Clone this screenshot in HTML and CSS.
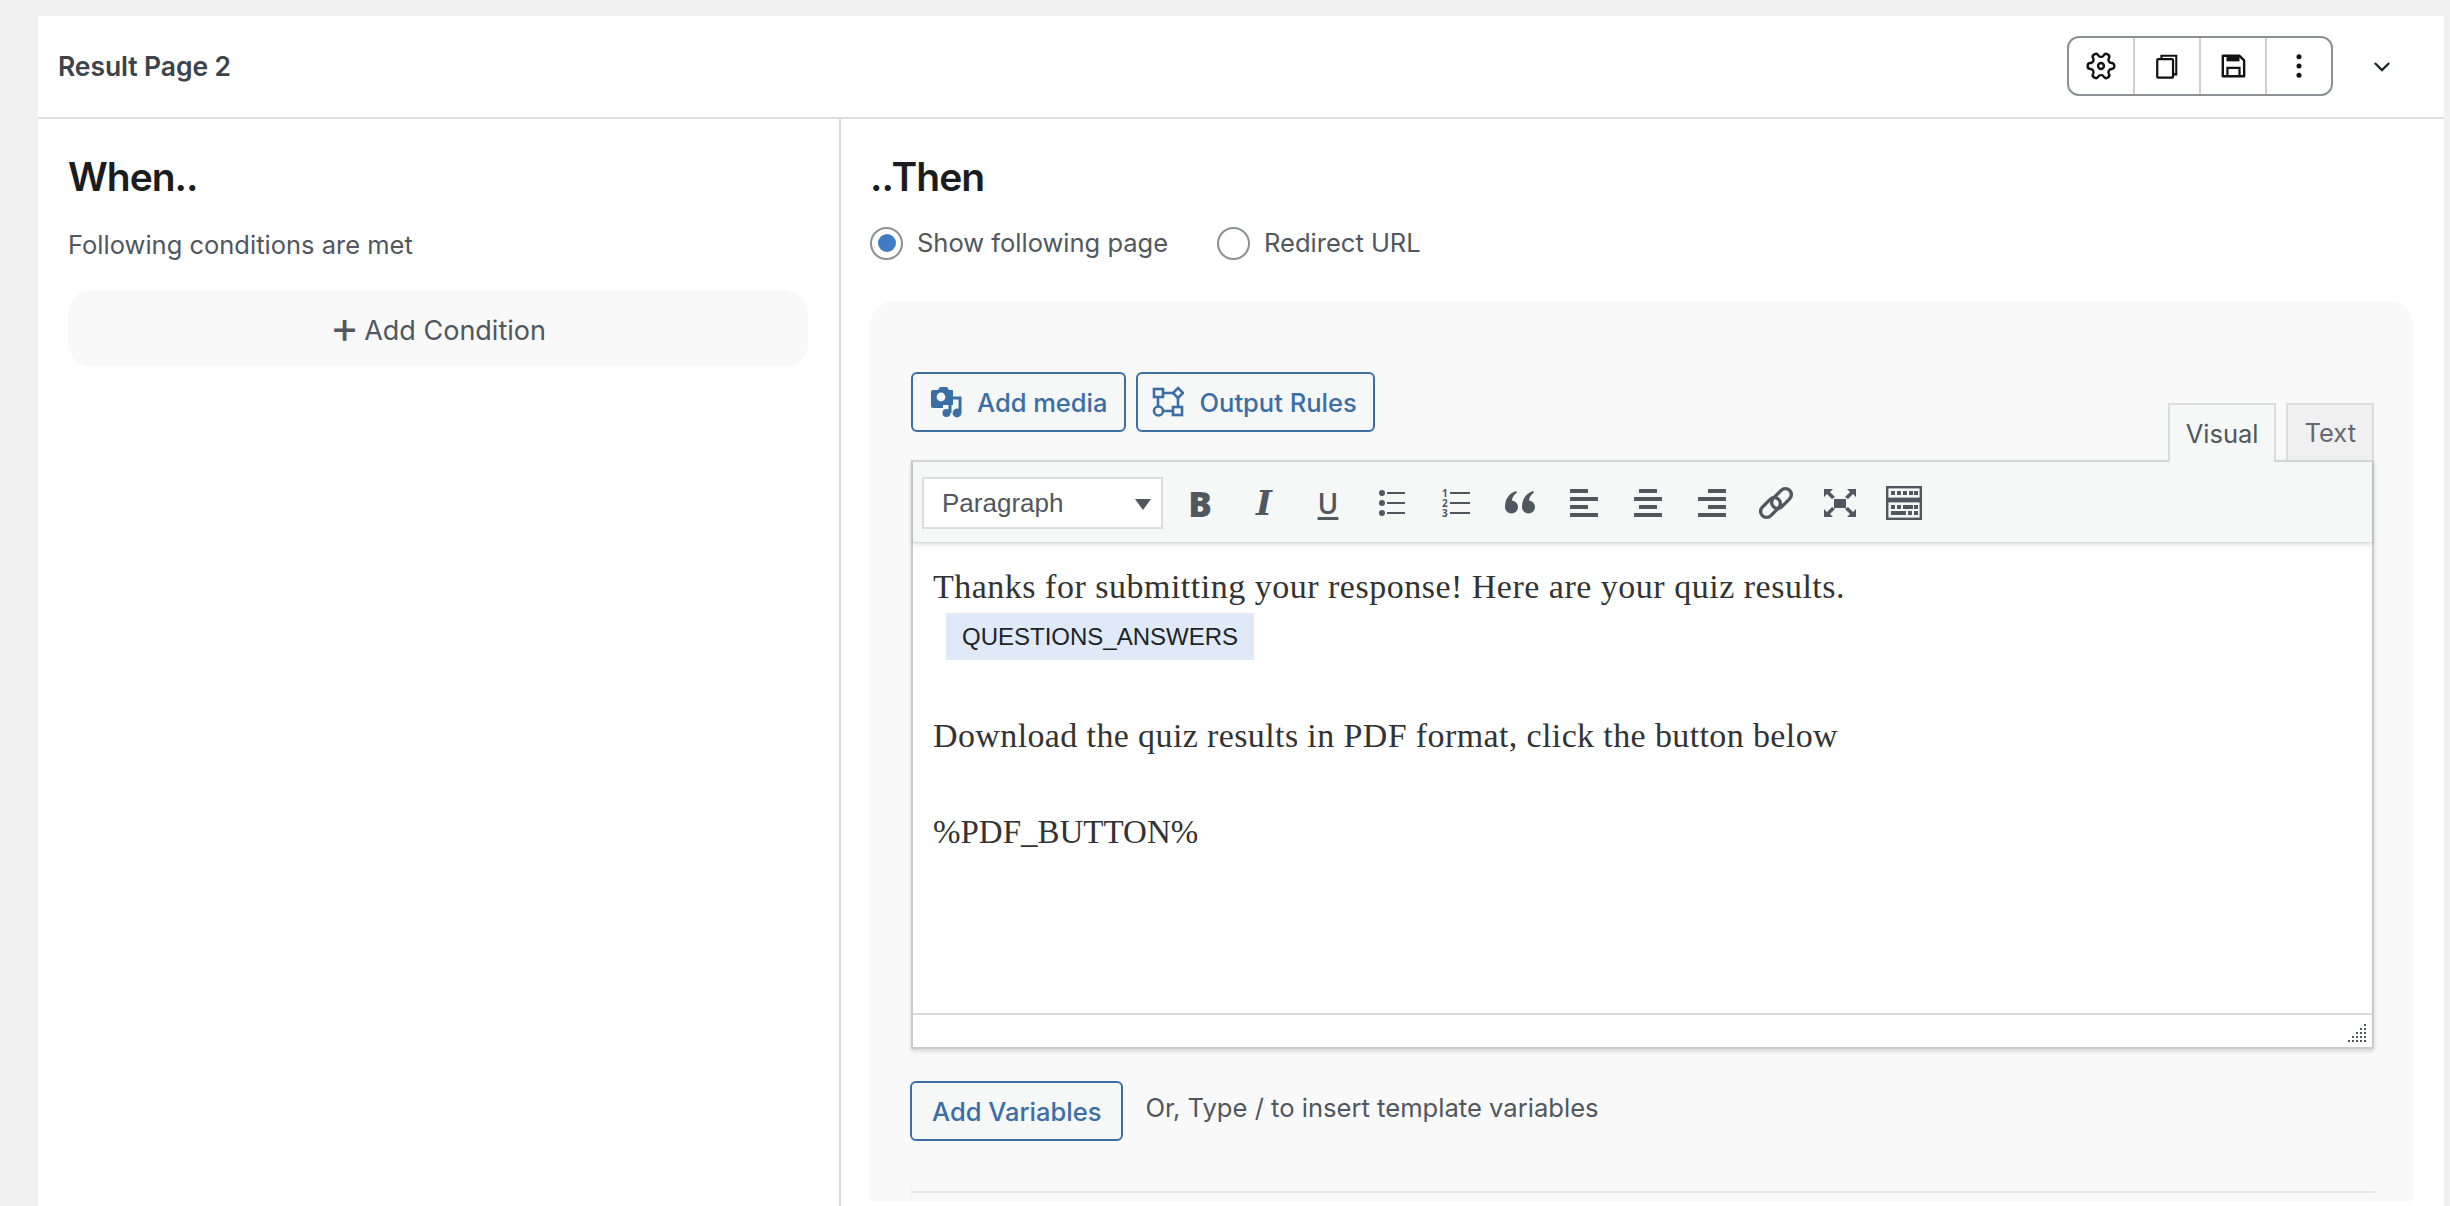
FILE: index.html
```html
<!DOCTYPE html>
<html lang="en">
<head>
<meta charset="utf-8">
<title>Result Page 2</title>
<link rel="stylesheet" href="styles.css">
</head>
<body>
<main class="card">
  <header class="card-head">
    <h2 class="page-title">Result Page 2</h2>
    <div class="head-actions">
      <div class="btn-group">
        <button class="group-btn" aria-label="Settings">
          <svg class="ico-gear" viewBox="0 0 24 24"><g transform="rotate(90 12 12)"><path d="M12.22 2h-.44a2 2 0 0 0-2 2v.18a2 2 0 0 1-1 1.73l-.43.25a2 2 0 0 1-2 0l-.15-.08a2 2 0 0 0-2.73.73l-.22.38a2 2 0 0 0 .73 2.73l.15.1a2 2 0 0 1 1 1.72v.51a2 2 0 0 1-1 1.74l-.15.09a2 2 0 0 0-.73 2.73l.22.38a2 2 0 0 0 2.73.73l.15-.08a2 2 0 0 1 2 0l.43.25a2 2 0 0 1 1 1.73V20a2 2 0 0 0 2 2h.44a2 2 0 0 0 2-2v-.18a2 2 0 0 1 1-1.73l.43-.25a2 2 0 0 1 2 0l.15.08a2 2 0 0 0 2.73-.73l.22-.39a2 2 0 0 0-.73-2.73l-.15-.08a2 2 0 0 1-1-1.74v-.5a2 2 0 0 1 1-1.74l.15-.09a2 2 0 0 0 .73-2.73l-.22-.38a2 2 0 0 0-2.73-.73l-.15.08a2 2 0 0 1-2 0l-.43-.25a2 2 0 0 1-1-1.73V4a2 2 0 0 0-2-2z" fill="none" stroke="#111" stroke-width="1.800"/><circle cx="12" cy="12" r="2.2" fill="none" stroke="#111" stroke-width="1.800"/></g></svg>
        </button>
        <button class="group-btn" aria-label="Duplicate">
          <svg class="ico-head" viewBox="0 0 28 28"><path d="M8 5.5V3h16v20h-3" fill="none" stroke="#111" stroke-width="2.2"/><rect x="3.5" y="6.5" width="17" height="20" rx="1" fill="none" stroke="#111" stroke-width="2.4"/></svg>
        </button>
        <button class="group-btn" aria-label="Save">
          <svg class="ico-head" viewBox="0 0 28 28"><path d="M3 3h18l5 5v17H3z" fill="none" stroke="#111" stroke-width="2.6" stroke-linejoin="round"/><rect x="7" y="3" width="14" height="6" fill="#111"/><path d="M8 25v-9h13v9" fill="none" stroke="#111" stroke-width="2.4"/></svg>
        </button>
        <button class="group-btn" aria-label="More">
          <svg class="ico-head" viewBox="0 0 28 28"><circle cx="14" cy="4" r="2.7" fill="#111"/><circle cx="14" cy="14" r="2.7" fill="#111"/><circle cx="14" cy="24" r="2.7" fill="#111"/></svg>
        </button>
      </div>
      <button class="chevron" aria-label="Collapse">
        <svg viewBox="0 0 20 12" class="ico-chev"><path d="M2 2l8 8 8-8" fill="none" stroke="#1d2327" stroke-width="2.4"/></svg>
      </button>
    </div>
  </header>

  <div class="columns">
    <section class="col-when">
      <h3 class="col-title">When..</h3>
      <p class="col-sub">Following conditions are met</p>
      <button class="add-condition"><span class="plus">+</span> Add Condition</button>
    </section>

    <section class="col-then">
      <h3 class="col-title">..Then</h3>
      <div class="radio-row">
        <label class="radio"><span class="radio-dot is-on"></span>Show following page</label>
        <label class="radio"><span class="radio-dot"></span>Redirect URL</label>
      </div>

      <div class="panel">
        <div class="editor-top">
          <div class="media-btns">
            <button class="blue-btn">
              <svg class="ico-btn" viewBox="0 0 32 32"><path d="M2 4h5l2-3h7l2 3h3a1 1 0 0 1 1 1v14H12v3H2a2 2 0 0 1-2-2V6a2 2 0 0 1 2-2z" fill="#3a6ea5"/><circle cx="10" cy="11" r="4.4" fill="#f8f9fa"/><path d="M18 13h1M20 12h9v15" fill="none" stroke="#3a6ea5" stroke-width="3"/><path d="M19 17v10" stroke="#3a6ea5" stroke-width="3"/><circle cx="15.500" cy="27" r="4" fill="#3a6ea5"/><circle cx="26" cy="27" r="4.400" fill="#3a6ea5"/></svg>
              Add media
            </button>
            <button class="blue-btn blue-btn-rules">
              <svg class="ico-btn" viewBox="0 0 32 32"><g fill="none" stroke="#3a6ea5" stroke-width="2.600"><rect x="2" y="3" width="9" height="8"/><path d="M26 2l5 5-5 5-5-5z"/><circle cx="6.500" cy="25" r="4.500"/><rect x="21" y="21" width="9" height="8"/><path d="M11 7h10M26 12v9M11 25h10M6 11v9"/></g></svg>
              Output Rules
            </button>
          </div>
          <div class="tabs">
            <span class="tab is-active">Visual</span>
            <span class="tab">Text</span>
          </div>
        </div>

        <div class="editor">
          <div class="toolbar">
            <div class="format-select">Paragraph<span class="caret"></span></div>
            <div class="tools">
              <span class="tool tool-b">B</span>
              <span class="tool tool-i">I</span>
              <span class="tool tool-u">U</span>
              <span class="tool"><svg class="ico-tool" viewBox="0 0 32 32"><g fill="#50575e"><circle cx="6" cy="6" r="3"/><circle cx="6" cy="16" r="3"/><circle cx="6" cy="26" r="3"/><rect x="11" y="5" width="18" height="2"/><rect x="11" y="15" width="18" height="2"/><rect x="11" y="25" width="18" height="2"/></g></svg></span>
              <span class="tool"><span class="numlist"><span class="numrow">1</span><span class="numrow">2</span><span class="numrow">3</span></span></span>
              <span class="tool"><svg class="ico-tool" viewBox="0 0 32 32"><g fill="#50575e"><path d="M12 4C6 6 1 11 1 20a6.500 6.500 0 1 0 7-6.500c0-3 2-6 5-8z"/><path d="M29 4c-6 2-11 7-11 16a6.500 6.500 0 1 0 7-6.500c0-3 2-6 5-8z"/></g></svg></span>
              <span class="tool"><svg class="ico-tool" viewBox="0 0 32 32"><g fill="#50575e"><rect x="2" y="2" width="18" height="4"/><rect x="2" y="10" width="28" height="4"/><rect x="2" y="18" width="18" height="4"/><rect x="2" y="26" width="28" height="4"/></g></svg></span>
              <span class="tool"><svg class="ico-tool" viewBox="0 0 32 32"><g fill="#50575e"><rect x="7" y="2" width="18" height="4"/><rect x="2" y="10" width="28" height="4"/><rect x="7" y="18" width="18" height="4"/><rect x="2" y="26" width="28" height="4"/></g></svg></span>
              <span class="tool"><svg class="ico-tool" viewBox="0 0 32 32"><g fill="#50575e"><rect x="12" y="2" width="18" height="4"/><rect x="2" y="10" width="28" height="4"/><rect x="12" y="18" width="18" height="4"/><rect x="2" y="26" width="28" height="4"/></g></svg></span>
              <span class="tool"><svg class="ico-link" viewBox="0 0 36 36"><g fill="none" stroke="#50575e" stroke-width="3.400"><rect x="12" y="7.500" width="23" height="12" rx="6" transform="rotate(-45 23.500 13.500)"/><rect x="1" y="16.500" width="23" height="12" rx="6" transform="rotate(-45 12.500 22.500)"/></g></svg></span>
              <span class="tool"><svg class="ico-tool" viewBox="0 0 32 32"><g fill="#50575e"><rect x="10" y="12" width="12" height="9"/><path d="M0 2h9L6 5l5 5-3 2-5-5-3 3zM32 2h-9l3 3-5 5 3 2 5-5 3 3zM0 30h9l-3-3 5-5-3-2-5 5-3-3zM32 30h-9l3-3-5-5 3-2 5 5 3-3z"/></g></svg></span>
              <span class="tool"><svg class="ico-link" viewBox="0 0 36 36"><g fill="none" stroke="#50575e" stroke-width="2.400"><rect x="1.200" y="2.200" width="33.600" height="11.600"/><rect x="1.200" y="16.200" width="33.600" height="17.600"/></g><g fill="#50575e"><rect x="5" y="6" width="4" height="4"/><rect x="11" y="6" width="4" height="4"/><rect x="17" y="6" width="4" height="4"/><rect x="23" y="6" width="4" height="4"/><rect x="28" y="6" width="4" height="4"/><rect x="5" y="20" width="4" height="4"/><rect x="11" y="20" width="4" height="4"/><rect x="17" y="20" width="10" height="4"/><rect x="28" y="20" width="4" height="4"/><rect x="5" y="26" width="15" height="4"/><rect x="22" y="26" width="4" height="4"/><rect x="28" y="26" width="4" height="4"/></g></svg></span>
            </div>
          </div>
          <div class="content">
            <p class="line line-first">Thanks for submitting your response! Here are your quiz results.</p>
            <div class="chip">QUESTIONS_ANSWERS</div>
            <p class="line line-dl">Download the quiz results in PDF format, click the button below</p>
            <p class="line line-pdf">%PDF_BUTTON%</p>
          </div>
          <div class="statusbar">
            <svg class="resize" viewBox="0 0 20 20"><g fill="#50575e"><rect x="17" y="0" width="2" height="2"/><rect x="17" y="4" width="2" height="2"/><rect x="13" y="4" width="2" height="2"/><rect x="17" y="8" width="2" height="2"/><rect x="13" y="8" width="2" height="2"/><rect x="9" y="8" width="2" height="2"/><rect x="17" y="12" width="2" height="2"/><rect x="13" y="12" width="2" height="2"/><rect x="9" y="12" width="2" height="2"/><rect x="5" y="12" width="2" height="2"/><rect x="17" y="16" width="2" height="2"/><rect x="13" y="16" width="2" height="2"/><rect x="9" y="16" width="2" height="2"/><rect x="5" y="16" width="2" height="2"/><rect x="1" y="16" width="2" height="2"/></g></svg>
          </div>
        </div>

        <div class="var-row">
          <button class="blue-btn blue-btn-var">Add Variables</button>
          <span class="var-hint">Or, Type / to insert template variables</span>
        </div>
        <hr class="divider">
      </div>
    </section>
  </div>
</main>
</body>
</html>
```

FILE: styles.css
```css
* { box-sizing: border-box; }
html, body { height: 100%; }
body {
  margin: 0;
  padding: 16px 6px 0 38px;
  background: #f0f0f1;
  font-family: Inter, "Liberation Sans", sans-serif;
  color: #50575e;
  overflow: hidden;
}
button { font: inherit; background: none; border: 0; padding: 0; margin: 0; color: inherit; }
h2, h3, p { margin: 0; }

.card { background: #fff; height: 1190px; display: flex; flex-direction: column; }

.card-head {
  height: 103px;
  border-bottom: 2px solid #e0dcdf;
  display: flex;
  align-items: center;
  justify-content: space-between;
  padding: 0 52px 1px 20px;
}
.page-title { font-size: 26.500px; font-weight: 600; color: #3c434a; letter-spacing: -.1px; }
.head-actions { display: flex; align-items: center; gap: 39px; }
.btn-group {
  width: 266px;
  height: 60px;
  display: flex;
  border: 2px solid #8c8f94;
  border-radius: 12px;
}
.group-btn {
  flex: 1;
  display: flex;
  align-items: center;
  justify-content: center;
  border-left: 2px solid #d0d0d0;
}
.group-btn:first-child { border-left: 0; }
.ico-head { width: 26px; height: 26px; display: block; }
.ico-gear { width: 32px; height: 32px; display: block; }
.chevron { width: 20px; height: 14px; display: flex; }
.ico-chev { width: 18px; height: 11px; display: block; margin: auto; }

.columns { flex: 1; display: flex; min-height: 0; }
.col-when {
  width: 803px;
  flex: none;
  border-right: 2px solid #dcd8db;
  padding: 0 31px 0 30px;
}
.col-then { flex: 1; padding: 0 31px 0 29px; min-width: 0; }
.col-title { font-size: 39px; font-weight: 600; color: #1a1c1e; line-height: 46px; margin-top: 35px; letter-spacing: -1px; }
.col-sub { font-size: 25.500px; line-height: 32px; margin-top: 29px; }
.add-condition {
  display: flex;
  align-items: center;
  justify-content: center;
  gap: 5px;
  width: 100%;
  height: 77px;
  margin-top: 29px;
  padding-top: 3px;
  border-radius: 24px;
  background: #f9f9f9;
  font-size: 27px;
  color: #50575e;
}
.plus { font-size: 44px; line-height: 1; margin-top: -6px; }

.radio-row { display: flex; gap: 49px; margin-top: 26px; }
.radio { display: flex; align-items: center; gap: 14px; font-size: 25.500px; line-height: 34px; }
.radio-dot {
  width: 33px; height: 33px; border-radius: 50%;
  border: 2px solid #8c8f94; background: #fff;
  display: flex; align-items: center; justify-content: center;
}
.radio-dot.is-on::after { content: ""; width: 18px; height: 18px; border-radius: 50%; background: #3f7cc4; }

.panel {
  margin-top: 41px;
  height: 900px;
  background: #f9f9f9;
  border-radius: 24px 24px 0 0;
  padding: 71px 39px 0 41px;
}
.editor-top { display: flex; justify-content: space-between; height: 88px; }
.media-btns { display: flex; gap: 10px; align-self: flex-start; }
.blue-btn {
  height: 60px;
  display: flex;
  align-items: center;
  gap: 14px;
  padding: 0 16px 0 18px;
  background: #f6f7f7;
  border: 2px solid #3a6ea5;
  border-radius: 6px;
  font-size: 25.500px;
  font-weight: 500;
  color: #3a6ea5;
}
.blue-btn-rules { padding-left: 14px; gap: 16px; }
.ico-btn { width: 32px; height: 32px; display: block; flex: none; }
.blue-btn-var { padding: 0 20px; }
.tabs { display: flex; gap: 10px; align-self: flex-end; }
.tab {
  height: 57px;
  padding: 0 16px;
  display: flex;
  align-items: center;
  border: 2px solid #dcdcde;
  border-bottom: 0;
  background: #f0f0f1;
  font-size: 25.500px;
  color: #646970;
}
.tab.is-active { background: #f6f7f7; color: #50575e; margin-bottom: -2px; height: 59px; position: relative; z-index: 1; }

.editor {
  border: 2px solid #c9cacc;
  border-top-color: #d5d6d8;
  background: #fff;
  box-shadow: 0 2px 4px rgba(0,0,0,.15);
}
.toolbar {
  height: 81px;
  background: #f6f7f7;
  display: flex;
  align-items: center;
  padding-left: 9px;
  box-shadow: 0 2px 4px rgba(0,0,0,.12);
  border-bottom: 1px solid #dcdcde;
  position: relative;
}
.format-select {
  width: 241px;
  height: 52px;
  margin-top: 2px;
  background: #fff;
  border: 2px solid #dcdcde;
  padding-left: 18px;
  display: flex;
  align-items: center;
  justify-content: space-between;
  padding-right: 10px;
  font-family: "Liberation Sans", Arial, sans-serif;
  font-size: 26px;
  color: #50575e;
}
.caret {
  width: 0; height: 0;
  border-left: 8px solid transparent;
  border-right: 8px solid transparent;
  border-top: 11px solid #50575e;
  margin-top: 3px;
}
.tools { display: flex; margin-left: 5px; }
.tool {
  width: 64px;
  height: 52px;
  margin-top: 2px;
  display: flex;
  align-items: center;
  justify-content: center;
  color: #50575e;
}
.tool-b { font: 800 35px "Open Sans", sans-serif; }
.tool-i { font: italic 700 34px "DejaVu Serif", serif; }
.tool-u { font: 600 28px "Open Sans", sans-serif; text-decoration: underline; text-decoration-thickness: 3px; text-underline-offset: 3px; }
.ico-tool { width: 32px; height: 32px; display: block; }
.ico-link { width: 36px; height: 36px; display: block; flex: none; }
.numlist { width: 28px; display: flex; flex-direction: column; }
.numrow {
  height: 10px;
  display: flex;
  align-items: center;
  gap: 2px;
  font: 700 10px/10px "Open Sans", sans-serif;
}
.numrow::after { content: ""; flex: 1; height: 2px; background: #50575e; }

.content {
  height: 470px;
  padding: 24px 20px 0;
  font-family: "Liberation Serif", Georgia, serif;
  font-size: 34px;
  letter-spacing: .5px;
  color: #333;
}
.line { line-height: 40px; }
.chip {
  width: 308px;
  height: 47px;
  margin: 6px 0 0 13px;
  padding-left: 16px;
  background: #dfe9f8;
  display: flex;
  align-items: center;
  font-family: "Liberation Sans", Arial, sans-serif;
  font-size: 24px;
  letter-spacing: 0;
  color: #1d2327;
}
.line-dl { margin-top: 56px; letter-spacing: .38px; }
.line-pdf { margin-top: 56px; font-size: 33px; letter-spacing: 0; }
.statusbar {
  height: 34px;
  border-top: 2px solid #dcdcde;
  display: flex;
  justify-content: flex-end;
  align-items: flex-end;
  padding: 0 5px 3px 0;
}
.resize { width: 20px; height: 20px; display: block; }

.var-row { display: flex; gap: 22px; margin-top: 32px; margin-left: -1px; }
.var-hint { font-size: 25.600px; line-height: 54px; }
.divider { border: 0; height: 2px; background: #e5e5e5; margin: 50px -1px 0 0; }
```
